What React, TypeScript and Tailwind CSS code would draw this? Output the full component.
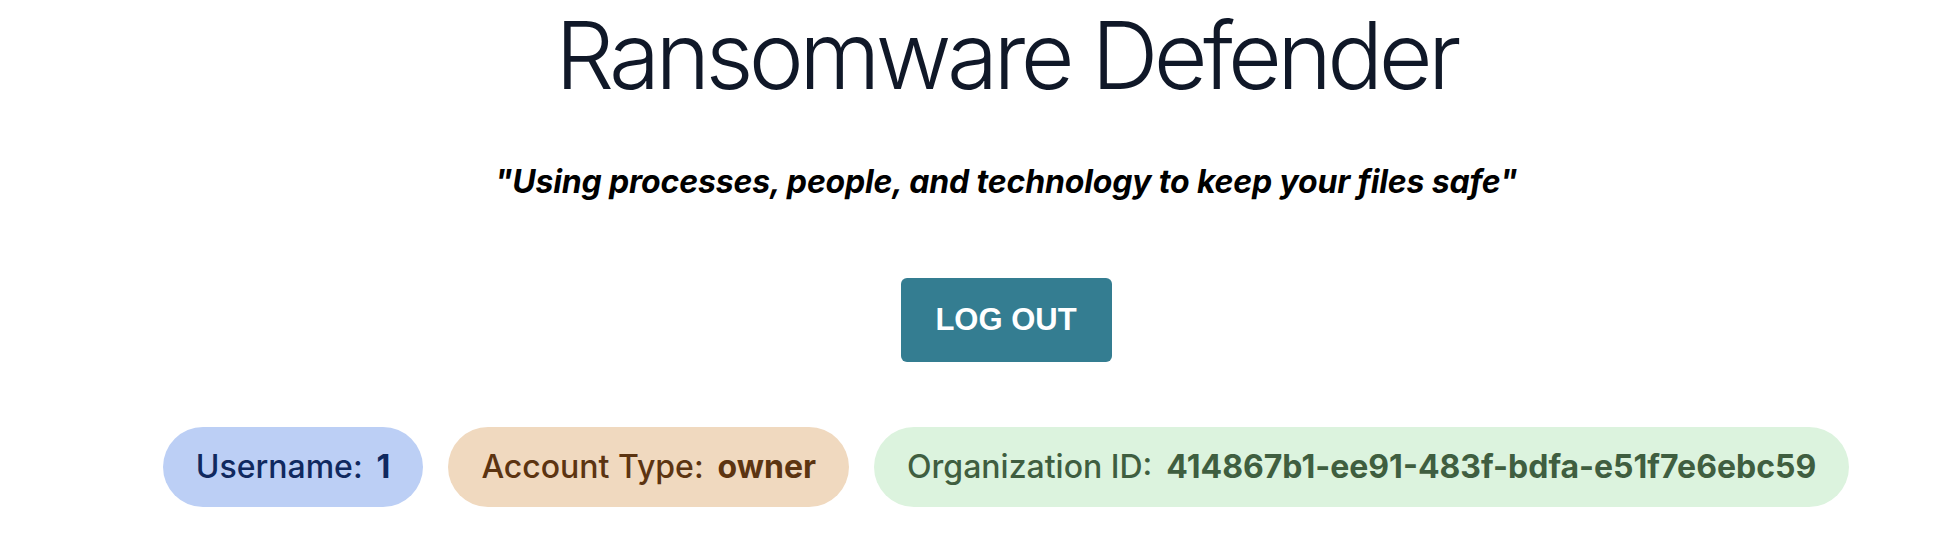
import React from "react";

interface InfoPill {
  label: string;
  value: string;
  bg: string;
  text: string;
}

const pills: InfoPill[] = [
  { label: "Username:", value: "1", bg: "bg-[#bccff5]", text: "text-[#10295f]" },
  { label: "Account Type:", value: "owner", bg: "bg-[#f0d9bf]", text: "text-[#5c3411]" },
  {
    label: "Organization ID:",
    value: "414867b1-ee91-483f-bdfa-e51f7e6ebc59",
    bg: "bg-[#dcf3de]",
    text: "text-[#3f5e40]",
  },
];

const App = () => {
  const handleLogout = () => {};

  return (
    <div className="w-full min-h-[552px] bg-white pl-[70px] flex flex-col items-center font-['Inter',sans-serif]">
      {/* title */}
      <h1 className="mt-[7px] text-[93px] leading-[96px] font-light tracking-[-0.05em] text-gray-900">
        Ransomware Defender
      </h1>

      <p className="mt-[63px] text-[32px] leading-none font-bold italic tracking-[-0.005em] text-black">
        "Using processes, people, and technology to keep your files safe"
      </p>

      <button
        onClick={handleLogout}
        className="mt-[80px] w-[211px] h-[84px] rounded-md bg-[#347d91] text-white text-[31px] font-bold uppercase font-['Liberation_Sans',Arial,sans-serif]"
      >
        Log out
      </button>

      {/* account info */}
      <div className="mt-[65px] flex items-center gap-[25px]">
        {pills.map((pill) => (
          <div
            key={pill.label}
            className={`h-[80px] px-[33px] rounded-full flex items-center text-[32px] ${pill.bg} ${pill.text}`}
          >
            <span className="font-medium">{pill.label}</span>
            <span className="ml-[14px] font-bold">{pill.value}</span>
          </div>
        ))}
      </div>
    </div>
  );
};

export default App;
